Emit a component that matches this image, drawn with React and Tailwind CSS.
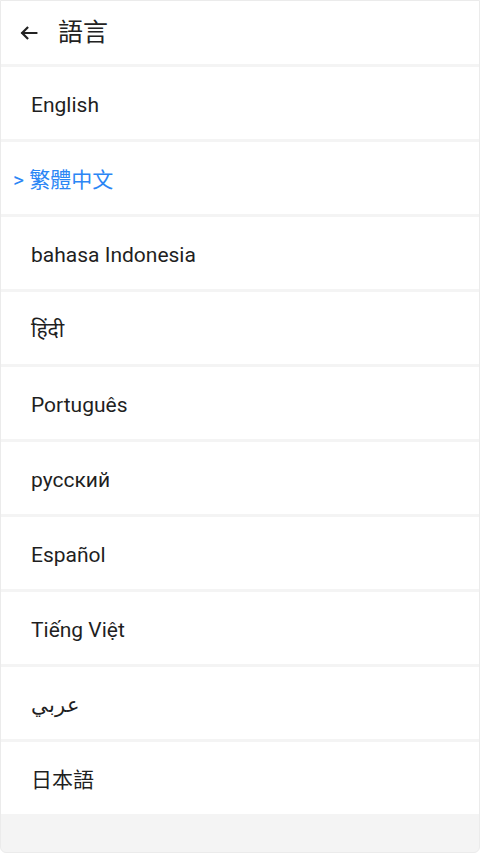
import React from "react";

const langs = [
  { t: "English" },
  { t: "繁體中文", sel: true },
  { t: "bahasa Indonesia" },
  { t: "हिंदी" },
  { t: "Português" },
  { t: "русский" },
  { t: "Español" },
  { t: "Tiếng Việt" },
  { t: "عربي" },
  { t: "日本語" },
];

export default function App() {
  return (
    <div
      className="w-[480px] h-[853px] bg-[#f4f4f4] border border-[#ebebeb] rounded-b-[6px] overflow-hidden flex flex-col"
      style={{ fontFamily: 'Roboto, "Noto Sans CJK TC", "Noto Sans", sans-serif' }}
    >
      <div className="h-[63px] bg-white flex items-center shrink-0">
        <svg className="ml-[17px] w-[22px] h-[22px]" viewBox="0 0 24 24" fill="none" stroke="#222" strokeWidth="2.4" strokeLinecap="square">
          <path d="M20 12H5" />
          <path d="M11 5.5L4.5 12L11 18.5" strokeLinecap="butt" />
        </svg>
        <span className="ml-[18px] text-[25px] text-[#222] leading-none">語言</span>
      </div>
      {langs.map((l, i) => (
        <div key={i} className="mt-[3px] h-[72px] pt-[4px] bg-white flex items-center shrink-0">
          {l.sel ? (
            <span className="ml-[12px] text-[21px] text-[#2b86f5] leading-none">
              {"> "}{l.t}
            </span>
          ) : (
            <span className="ml-[30px] text-[21px] text-[#1f1f1f] leading-none">{l.t}</span>
          )}
        </div>
      ))}
    </div>
  );
}
